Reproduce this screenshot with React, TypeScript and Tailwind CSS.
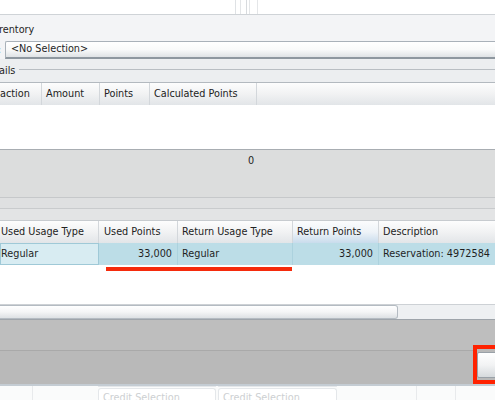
import React from 'react'

const headerBg = 'bg-gradient-to-b from-[#fdfdfd] via-[#f1f2f3] to-[#e2e5e8]'

function HeadCell({ label, className = '' }: { label: string; className?: string }) {
  return (
    <div className={`flex h-full shrink-0 items-center border-r border-[#d3d7db] pl-1 ${className}`}>
      <span className="whitespace-nowrap">{label}</span>
    </div>
  )
}

export default function App() {
  return (
    <div className="relative h-[400px] w-[495px] overflow-hidden bg-white font-['DejaVu_Sans',Verdana,sans-serif] text-[9.7px] text-[#1f1f1f]">
      {/* splitter strip on top */}
      <div className="flex h-[14px] bg-white">
        <div className="w-[235px]" />
        <div className="w-[5px] border-l border-[#dfe2e5]" />
        <div className="w-[6px] border-l border-[#e4e6e8]" />
        <div className="w-[3px] border-l border-[#d8dbde]" />
        <div className="w-[8px] border-l border-[#e4e6e8]" />
        <div className="border-l border-[#e4e6e8]" />
      </div>

      {/* inventory section */}
      <div className="flex h-[27px] items-end border-t border-[#cfd3d7] bg-[#f3f4f6] pb-[3px]">
        <span className="-ml-px">rentory</span>
      </div>
      <div className="flex h-[18px] items-stretch bg-[#f3f4f6]">
        <div className="flex w-[5px] items-center text-[#8fb0c8]">
          <span className="-ml-[2px]">:</span>
        </div>
        <div className="flex flex-1 items-center rounded-tl-[2px] border-t border-l border-b-2 border-[#a9b1b9] border-b-[#8e979f] bg-gradient-to-b from-white via-[#f9fafa] to-[#dfe2e5] pl-[5px]">
          &lt;No Selection&gt;
        </div>
      </div>

      {/* details group */}
      <div className="flex h-[10px] bg-[#eceef0]" />
      <div className="flex h-[13px] items-start bg-[#eceef0]">
        <span className="-mt-[5px] -ml-px pr-[4px]">ails</span>
        <div className="flex-1 border-t border-[#b9bec3]" />
      </div>
      <div className="flex h-[23px] border-t border-[#b3b9bf] text-[#222]">
        <div className={`flex w-full ${headerBg}`}>
          <HeadCell label="action" className="w-[42px] !pl-0" />
          <HeadCell label="Amount" className="w-[58px]" />
          <HeadCell label="Points" className="w-[50px]" />
          <HeadCell label="Calculated Points" className="w-[107px]" />
          <div className="flex-1" />
        </div>
      </div>
      <div className="h-[44px] bg-white" />

      {/* totals panel */}
      <div className="flex h-[48px] justify-start border-t border-[#a8adb2] bg-[#dcdddd] pt-[4px]">
        <span className="ml-[248px]">0</span>
      </div>
      <div className="h-[11px] border-t border-[#c6c8ca] bg-[#dfe0e1]" />
      <div className="h-[12px] border-t border-[#c9cbcd] bg-[#e3e4e5]" />

      {/* usage grid */}
      <div className={`flex h-[23px] border-t border-[#c7cbcf] text-[#222] ${headerBg}`}>
        <HeadCell label="Used Usage Type" className="w-[99px] !pl-[1px]" />
        <HeadCell label="Used Points" className="w-[79px] !pl-[5px]" />
        <HeadCell label="Return Usage Type" className="w-[115px]" />
        <HeadCell
          label="Return Points"
          className="w-[86px] bg-gradient-to-b from-[#fbfcfd] via-[#eef3f8] to-[#c9dcec]"
        />
        <HeadCell label="Description" className="flex-1 border-r-0" />
      </div>
      <div className="flex h-[22px] bg-[#bcdde7]">
        <div className="flex w-[99px] shrink-0 items-center border border-[#9fc9d7] bg-[#d8ecf2] pl-0">
          Regular
        </div>
        <div className="flex w-[79px] shrink-0 items-center justify-end border-r border-[#acd2de] pr-[5px]">
          33,000
        </div>
        <div className="flex w-[115px] shrink-0 items-center border-r border-[#acd2de] pl-1">
          Regular
        </div>
        <div className="flex w-[86px] shrink-0 items-center justify-end border-r border-[#acd2de] pr-[5px]">
          33,000
        </div>
        <div className="flex flex-1 items-center whitespace-nowrap pl-1">
          Reservation: 4972584
        </div>
      </div>
      <div className="h-[2px]" />
      <div className="ml-[106px] h-[4px] w-[186px] bg-[#f52b0c]" />
      <div className="h-[33px]" />

      {/* horizontal scrollbar */}
      <div className="flex h-[15px] border-t border-[#cdd1d5] bg-[#eef0f2]">
        <div className="w-[398px] rounded-r-[3px] border border-l-0 border-[#b4bbc2] bg-gradient-to-b from-white via-[#f4f5f6] to-[#dde1e4]" />
        <div className="flex-1" />
      </div>

      {/* toolbar bands */}
      <div className="h-[31px] border-t border-[#9ea4aa] bg-[#bebebe]" />
      <div className="h-[34px] border-t border-[#a9a9a9] bg-[#b9b9b9]" />

      {/* credit selection row */}
      <div className="flex h-[17px] border-t-2 border-[#c4ccd3] bg-[#fafbfb] text-[#cdd0d2]">
        <div className="w-[33px] border-r border-[#e8eaec]" />
        <div className="w-[65px]" />
        <div className="flex w-[118px] flex-col">
          <div className="h-[6px] rounded-b-[3px] border border-t-0 border-[#e4e7ea] bg-white" />
          <div className="mt-[1px] flex-1 rounded-t-[3px] border border-b-0 border-[#e4e7ea] bg-white pl-1 pt-[4px] leading-none">
            Credit Selection
          </div>
        </div>
        <div className="w-[2px]" />
        <div className="flex w-[119px] flex-col">
          <div className="h-[6px] rounded-b-[3px] border border-t-0 border-[#e4e7ea] bg-white" />
          <div className="mt-[1px] flex-1 rounded-t-[3px] border border-b-0 border-[#e4e7ea] bg-white pl-1 pt-[4px] leading-none">
            Credit Selection
          </div>
        </div>
        <div className="w-[80px] border-r border-[#e8eaec]" />
        <div className="w-[39px] border-r border-[#e8eaec]" />
        <div className="flex-1" />
      </div>

      {/* highlighted button at the right edge */}
      <div className="absolute left-[473px] top-[345px] h-[39px] w-[30px] border-4 border-[#ff2200] bg-[#b9b9b9] pt-[3px]">
        <div className="h-[26px] rounded-l-[2px] border border-[#9aa1a8] bg-gradient-to-b from-white via-[#f2f3f4] to-[#d6dadd]" />
      </div>
    </div>
  )
}
